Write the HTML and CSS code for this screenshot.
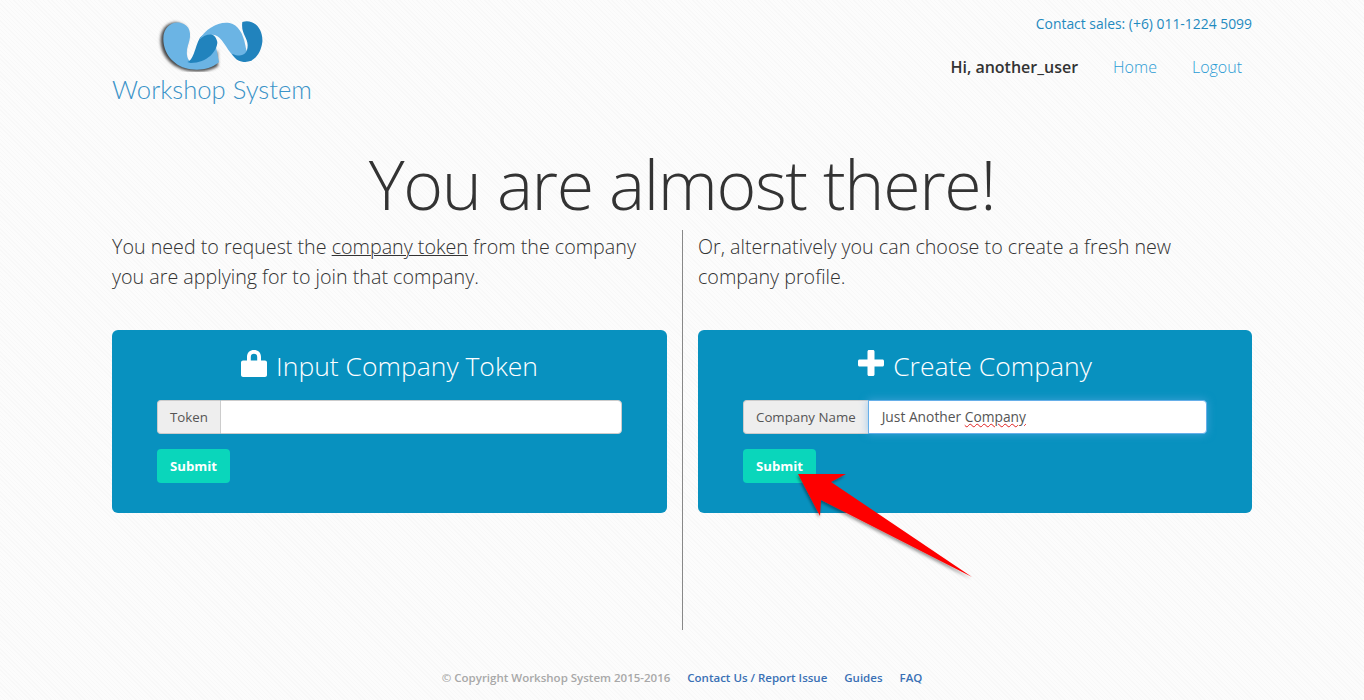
FILE: index.html
```html
<!DOCTYPE html>
<html lang="en">
<head>
    <meta charset="UTF-8">
    <meta name="viewport" content="width=device-width, initial-scale=1.0">
    <title>Workshop System</title>
    <link rel="stylesheet" href="styles.css">
</head>
<body>

<div class="container">
    <!-- Header -->
    <header class="site-header">
        <a class="logo" href="#">
            <svg class="logo-mark" viewBox="160 50 330 165" width="110" height="55">
                <defs>
                    <filter id="blur" x="-20%" y="-20%" width="140%" height="140%">
                        <feGaussianBlur stdDeviation="5"/>
                    </filter>
                </defs>
                <path d="M180 120 C180 80 208 62 233 68 C260 74 268 100 256 135 C250 155 250 175 260 190 C300 195 330 175 350 150 L352 197 C320 217 290 214 262 211 C213 203 180 165 180 120 Z" fill="#444" filter="url(#blur)"/>
                <path d="M188 115 C188 80 215 62 240 68 C268 74 275 100 262 135 C256 155 258 175 268 183 C295 186 325 165 345 135 L355 186 C330 206 300 211 270 207 C225 200 188 165 188 115 Z" fill="#6bb4e4"/>
                <path d="M260 185 C282 178 284 130 300 110 C318 92 344 96 350 125 C350 152 320 188 270 188 Z" fill="#2183bd"/>
                <path d="M296 118 C316 83 355 62 387 68 C412 73 428 100 434 135 C438 155 442 170 454 182 L412 178 C388 165 378 134 356 112 C340 98 314 98 296 118 Z" fill="#6bb4e4"/>
                <path d="M425 65 C460 55 488 85 485 125 C480 165 455 190 425 184 C410 181 402 174 394 160 C420 172 441 165 441 135 C441 110 420 100 425 65 Z" fill="#2183bd"/>
            </svg>
            <span class="logo-text">Workshop System</span>
        </a>
        <div class="header-right">
            <p class="contact-sales">Contact sales: (+6) 011-1224 5099</p>
            <nav class="main-nav">
                <span class="nav-user">Hi, another_user</span>
                <a href="#">Home</a>
                <a href="#">Logout</a>
            </nav>
        </div>
    </header>

    <h1 class="page-title">You are almost there!</h1>

    <div class="columns">
        <section class="column">
            <p class="lead">You need to request the <u class="token-link">company token</u> from the company<br>you are applying for to join that company.</p>
            <div class="panel">
                <h2 class="panel-title">
                    <svg class="panel-icon" viewBox="0 0 26 28" width="26" height="28">
                        <path d="M6 12 V8 C6 3.5 9 1 13 1 C17 1 20 3.5 20 8 V12 H16.2 V8 C16.2 6 15 4.8 13 4.8 C11 4.8 9.8 6 9.8 8 V12 Z M2 11.5 H24 C25 11.5 26 12.4 26 13.5 V26 C26 27 25 28 24 28 H2 C1 28 0 27 0 26 V13.5 C0 12.4 1 11.5 2 11.5 Z" fill="#fff"/>
                    </svg>
                    Input Company Token
                </h2>
                <div class="input-group">
                    <span class="input-addon">Token</span>
                    <div class="form-control"></div>
                </div>
                <button class="btn-submit">Submit</button>
            </div>
        </section>

        <section class="column column-right">
            <p class="lead">Or, alternatively you can choose to create a fresh new<br>company profile.</p>
            <div class="panel">
                <h2 class="panel-title">
                    <svg class="panel-icon" viewBox="0 0 26 26" width="26" height="26">
                        <path d="M9.5 1.5 C9.5 .7 10.2 0 11 0 H15 C15.8 0 16.5 .7 16.5 1.5 V9.5 H24.5 C25.3 9.5 26 10.2 26 11 V15 C26 15.8 25.3 16.5 24.5 16.5 H16.5 V24.5 C16.5 25.3 15.8 26 15 26 H11 C10.2 26 9.5 25.3 9.5 24.5 V16.5 H1.5 C.7 16.5 0 15.8 0 15 V11 C0 10.2 .7 9.5 1.5 9.5 H9.5 Z" fill="#fff"/>
                    </svg>
                    Create Company
                </h2>
                <div class="input-group">
                    <span class="input-addon">Company Name</span>
                    <div class="form-control is-focus">Just Another <span class="misspelt">Company</span></div>
                </div>
                <button class="btn-submit">Submit</button>
            </div>
        </section>
    </div>

    <!-- Arrow drawn over the submit button -->
    <svg class="arrow" viewBox="790 465 195 120" width="195" height="120">
        <defs>
            <filter id="arrowShadow" x="-10%" y="-10%" width="120%" height="130%">
                <feDropShadow dx="-1" dy="2" stdDeviation="1.5" flood-color="#000" flood-opacity=".4"/>
            </filter>
        </defs>
        <polygon points="798,474 846,474 831,482 972,577 821,500 820,516" fill="#fe0000" filter="url(#arrowShadow)"/>
    </svg>

    <footer class="site-footer">
        <span class="copyright">© Copyright Workshop System 2015-2016</span>
        <a href="#">Contact Us / Report Issue</a>
        <a href="#">Guides</a>
        <a href="#">FAQ</a>
    </footer>
</div>

</body>
</html>
```

FILE: styles.css
```css
* {
    box-sizing: border-box;
}

body {
    margin: 0;
    height: 700px;
    overflow: hidden;
    background-color: #fbfbfb;
    background-image: repeating-linear-gradient(45deg, rgba(0,0,0,0.012) 0, rgba(0,0,0,0.012) 1px, rgba(255,255,255,0.25) 1px, rgba(255,255,255,0.25) 3px);
    font-family: "Open Sans", "Noto Sans", sans-serif;
    color: #333;
}

.container {
    position: relative;
    width: 1140px;
    margin: 0 auto;
}

a {
    text-decoration: none;
}

/* Header */
.site-header {
    display: flex;
    justify-content: space-between;
    height: 137px;
}

.logo {
    display: flex;
    flex-direction: column;
    align-items: center;
    width: 200px;
    padding-top: 17px;
}

.logo-mark {
    display: block;
    margin-right: 7px;
}

.logo-text {
    margin-top: 1px;
    font-family: Lato, sans-serif;
    font-weight: 300;
    font-size: 25.6px;
    line-height: 32px;
    color: #3a93c8;
    white-space: nowrap;
}

.header-right {
    text-align: right;
}

.contact-sales {
    margin: 14px 0 0;
    font-size: 13.9px;
    font-weight: 500;
    line-height: 20px;
    color: #1f8abf;
}

.main-nav {
    display: flex;
    justify-content: flex-end;
    align-items: center;
    gap: 35px;
    margin-top: 20px;
    padding-right: 10px;
    font-size: 16px;
    line-height: 26px;
}

.main-nav a {
    font-weight: 300;
    color: #2a9bd4;
}

.nav-user {
    font-weight: 600;
    color: #333;
}

/* Title */
.page-title {
    margin: 0;
    height: 93px;
    text-align: center;
    font-size: 68px;
    font-weight: 300;
    letter-spacing: -1.35px;
    line-height: 93px;
    color: #333;
}

/* Two columns */
.columns {
    display: flex;
    height: 400px;
}

.column {
    width: 570px;
    padding-right: 15px;
}

.column-right {
    width: 570px;
    padding: 0 0 0 15px;
    border-left: 1px solid #888;
}

.lead {
    margin: 2px 0 38px;
    height: 60px;
    font-size: 19.7px;
    font-weight: 300;
    line-height: 30px;
    white-space: nowrap;
}

.token-link {
    text-decoration-thickness: 1px;
}

.panel {
    height: 183px;
    padding: 17px 45px 0;
    border-radius: 6px;
    background: #0891bf;
    color: #fff;
}

.panel-title {
    display: flex;
    justify-content: center;
    align-items: center;
    gap: 9px;
    margin: 0 0 15px;
    height: 38px;
    font-size: 26.5px;
    font-weight: 300;
    line-height: 38px;
}

.panel-icon {
    display: block;
    margin-top: -6px;
}

.input-group {
    display: flex;
    height: 34px;
    margin-bottom: 15px;
    font-size: 13.3px;
    line-height: 32px;
}

.input-addon {
    padding: 0 12px;
    border: 1px solid #ccc;
    border-right: 0;
    border-radius: 4px 0 0 4px;
    background: #eee;
    color: #555;
    white-space: nowrap;
}

.form-control {
    flex: 1;
    padding: 0 12px 0 13px;
    border: 1px solid #ccc;
    border-radius: 0 4px 4px 0;
    background: #fff;
    color: #555;
    font-size: 13.8px;
    font-weight: 500;
}

.form-control.is-focus {
    border-color: #66afe9;
    box-shadow: 0 0 8px rgba(102,175,233,0.6);
}

.misspelt {
    text-decoration: underline wavy #e02020;
    text-decoration-thickness: 1px;
}

.btn-submit {
    display: block;
    width: 73px;
    height: 34px;
    padding: 0;
    border: 0;
    border-radius: 4px;
    background: #0ad6bb;
    color: #fff;
    font-family: inherit;
    font-size: 13.2px;
    font-weight: 700;
}

.arrow {
    position: absolute;
    left: 678px;
    top: 465px;
}

/* Footer */
.site-footer {
    display: flex;
    justify-content: center;
    gap: 17px;
    margin-top: 39px;
    font-size: 11.5px;
    font-weight: 600;
    line-height: 18px;
}

.site-footer a {
    color: #3a70b5;
}

.copyright {
    color: #a8a8a8;
}
```
